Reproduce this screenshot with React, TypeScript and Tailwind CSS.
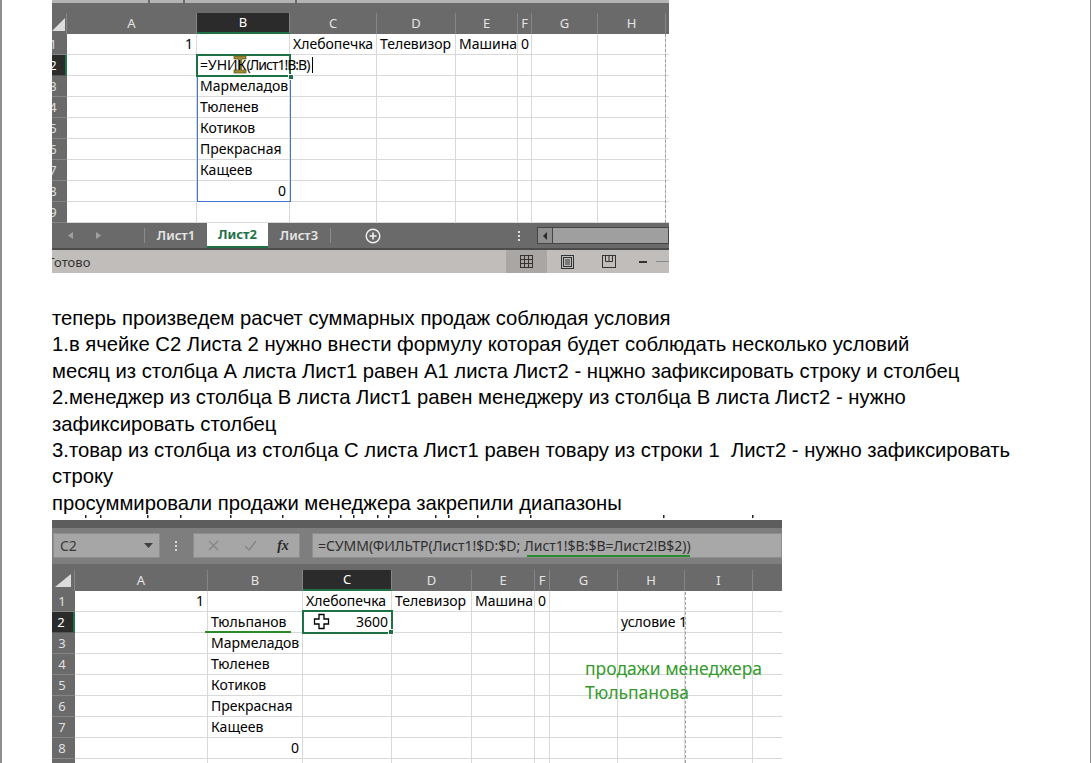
import React from "react";

type CellData = { t?: string; r?: boolean; edit?: boolean };

const NOTO = "font-['Noto_Sans',sans-serif]";

function Corner({ pts, w, h }: { pts: string; w: number; h: number }) {
  return (
    <svg width={w} height={h} className="block">
      <polygon points={pts} fill="#dcdcdc" />
    </svg>
  );
}

function SheetGrid({
  hdrW,
  widths,
  letters,
  selCol,
  selRow,
  rows,
  clipNums,
  corner,
}: {
  hdrW: string;
  widths: string[];
  letters: string[];
  selCol: number;
  selRow: number;
  rows: CellData[][];
  clipNums: boolean;
  corner: React.ReactNode;
}) {
  return (
    <div className={`flex flex-col ${NOTO}`}>
      <div className="flex h-[21px] bg-[#6a6a6a]">
        <div className={`${hdrW} shrink-0 h-full border-r border-[#858585] overflow-hidden`}>{corner}</div>
        {letters.map((l, i) => (
          <div
            key={l}
            className={`${widths[i]} shrink-0 h-full flex items-center justify-center border-r border-[#858585] text-[13px] leading-none ${
              i === selCol ? "bg-[#2b2b2b] text-white border-b-2 border-b-[#1e7145]" : "text-[#e4e4e4]"
            }`}
          >
            {l}
          </div>
        ))}
        <div className="flex-1 h-full" />
      </div>
      {rows.map((row, ri) => (
        <div key={ri} className="flex h-[21px]">
          <div
            className={`${hdrW} shrink-0 h-full flex items-center overflow-hidden border-b text-[13px] leading-none ${
              ri === selRow
                ? "bg-[#2b2b2b] text-white border-r-2 border-r-[#1e7145] border-b-[#555555]"
                : "bg-[#6a6a6a] text-[#e0e0e0] border-b-[#858585]"
            } ${clipNums ? "" : "justify-center"}`}
          >
            {clipNums ? (
              <div className="w-[22px] ml-[-10px] shrink-0 text-center">{ri + 1}</div>
            ) : (
              <div className="pr-[3px]">{ri + 1}</div>
            )}
          </div>
          {row.map((c, ci) => (
            <div
              key={ci}
              className={`${widths[ci]} shrink-0 h-full border-r border-b border-[#d9d9d9] flex items-center px-[3px] whitespace-nowrap text-[14px] leading-none text-black ${
                c.r ? "justify-end" : "justify-start"
              }`}
            >
              {c.t ? (
                c.edit ? (
                  <span className="relative z-10 flex items-center">
                    <span>=УНИК</span>
                    <span className="tracking-[-1px]">(Лист1!B:B)</span>
                    <span className="ml-[3px] w-[1px] h-[16px] bg-black" />
                  </span>
                ) : (
                  <span className="relative z-10">{c.t}</span>
                )
              ) : null}
            </div>
          ))}
          <div className="flex-1 h-full border-b border-[#d9d9d9]" />
        </div>
      ))}
    </div>
  );
}

const X1W = ["w-[130px]", "w-[93px]", "w-[87px]", "w-[79px]", "w-[62px]", "w-[14px]", "w-[66px]", "w-[68px]"];
const X1L = ["A", "B", "C", "D", "E", "F", "G", "H"];
const e: CellData = {};
const X1R: CellData[][] = [
  [{ t: "1", r: true }, e, { t: "Хлебопечка" }, { t: "Телевизор" }, { t: "Машина" }, { t: "0" }, e, e],
  [e, { t: "=УНИК(Лист1!B:B)", edit: true }, e, e, e, e, e, e],
  [e, { t: "Мармеладов" }, e, e, e, e, e, e],
  [e, { t: "Тюленев" }, e, e, e, e, e, e],
  [e, { t: "Котиков" }, e, e, e, e, e, e],
  [e, { t: "Прекрасная" }, e, e, e, e, e, e],
  [e, { t: "Кащеев" }, e, e, e, e, e, e],
  [e, { t: "0", r: true }, e, e, e, e, e, e],
  [e, e, e, e, e, e, e, e],
];

function Excel1() {
  return (
    <div className="relative w-[617px] h-[273px] overflow-hidden flex flex-col bg-white">
      <div className="h-[3px] bg-[#b4b4b4] flex">
        <div className="w-[96px]" />
        <div className="w-[2px] bg-[#6a6a6a]" />
        <div className="w-[33px]" />
        <div className="w-[2px] bg-[#6a6a6a]" />
        <div className="w-[110px]" />
        <div className="w-[2px] bg-[#6a6a6a]" />
      </div>
      <div className="h-[10px] bg-[#6a6a6a]" />
      <SheetGrid
        hdrW="w-[15px]"
        widths={X1W}
        letters={X1L}
        selCol={1}
        selRow={1}
        rows={X1R}
        clipNums={true}
        corner={<Corner pts="13,5 13,18 0,18" w={15} h={21} />}
      />
      {/* tab bar */}
      <div className={`flex h-[25px] bg-[#6a6a6a] items-stretch ${NOTO}`}>
        <div className="w-[92px] shrink-0 flex items-center">
          <svg width="92" height="25" className="block">
            <polygon points="21,9 21,16 16,12.5" fill="#a0a0a0" />
            <polygon points="44,9 44,16 49,12.5" fill="#a0a0a0" />
          </svg>
        </div>
        <div className="w-[1px] shrink-0 bg-[#8c8c8c] my-[5px]" />
        <div className="w-[62px] shrink-0 flex items-center justify-center text-[13px] font-semibold text-[#e6e6e6]">Лист1</div>
        <div className="w-[61px] shrink-0 flex items-center justify-center text-[13px] font-bold text-[#1e7145] bg-white border-b-2 border-[#1e7145]">
          Лист2
        </div>
        <div className="w-[62px] shrink-0 flex items-center justify-center text-[13px] font-semibold text-[#e6e6e6]">Лист3</div>
        <div className="w-[1px] shrink-0 bg-[#8c8c8c] my-[5px]" />
        <div className="w-[84px] shrink-0 flex items-center justify-center">
          <svg width="16" height="16" viewBox="0 0 16 16" className="block">
            <circle cx="8" cy="8" r="6.8" fill="none" stroke="#f2f2f2" strokeWidth="1.4" />
            <path d="M8 4.5v7M4.5 8h7" stroke="#f2f2f2" strokeWidth="1.6" />
          </svg>
        </div>
        <div className="w-[100px] shrink-0" />
        <div className="w-[8px] shrink-0 flex flex-col items-center justify-center gap-[2px]">
          <div className="w-[2px] h-[2px] bg-[#dedede]" />
          <div className="w-[2px] h-[2px] bg-[#dedede]" />
          <div className="w-[2px] h-[2px] bg-[#dedede]" />
        </div>
        <div className="w-[14px] shrink-0" />
        <div className="flex-1 flex items-center">
          <div className="w-full h-[17px] flex border border-[#454545] bg-[#9f9f9f]">
            <div className="w-[15px] h-full border-r border-[#454545] bg-[#8f8f8f] flex items-center justify-center">
              <svg width="6" height="8" className="block">
                <polygon points="5,0 5,8 1,4" fill="#2a2a2a" />
              </svg>
            </div>
          </div>
        </div>
      </div>
      <div className="h-[2px] bg-[#4c4c4c]" />
      {/* status bar */}
      <div className={`flex h-[23px] bg-[#c1bdba] items-stretch ${NOTO}`}>
        <div className="flex-1 flex items-center pt-[2px] ml-[-4px] text-[13px] text-[#333333]">Готово</div>
        <div className="w-[41px] shrink-0 bg-[#a9a6a3] flex items-center justify-center">
          <svg width="13" height="13" className="block">
            <rect x="0.5" y="0.5" width="12" height="12" fill="none" stroke="#333" />
            <path d="M4.5 .5v12M8.5 .5v12M.5 4.5h12M.5 8.5h12" stroke="#333" />
          </svg>
        </div>
        <div className="w-[40px] shrink-0 flex items-center justify-center">
          <svg width="13" height="14" className="block">
            <rect x="0.5" y="0.5" width="12" height="13" fill="none" stroke="#333" />
            <rect x="2.5" y="2.5" width="8" height="9" fill="#bbb" stroke="#333" />
            <path d="M4 5h5M4 7h5M4 9h5" stroke="#333" />
          </svg>
        </div>
        <div className="w-[43px] shrink-0 flex items-center justify-center">
          <svg width="14" height="13" className="block">
            <rect x="0.5" y="0.5" width="13" height="12" fill="none" stroke="#333" />
            <path d="M3.5 .5v6h7v-6M7 .5v6" fill="none" stroke="#333" />
          </svg>
        </div>
        <div className="w-[26px] shrink-0 flex items-center justify-center">
          <div className="w-[8px] h-[2px] bg-[#333333]" />
        </div>
        <div className="w-[13px] shrink-0 flex items-center">
          <div className="w-full h-[1px] bg-[#8a8a8a]" />
        </div>
      </div>

      {/* overlays */}
      <div className="absolute left-[613px] top-[34px] h-[189px] border-l border-dashed border-[#a0a0a0]" />
      <div className="absolute left-[145px] top-[55px] w-[94px] h-[147px] border border-[#3f78cc]" />
      <div className="absolute left-[144px] top-[54px] w-[95px] h-[23px] border-2 border-[#1e7145]" />
      <div className="absolute left-[236px] top-[74px] w-[6px] h-[6px] bg-[#1e7145] border border-white" />
      <div className="absolute left-[181px] top-[55px]">
        <svg width="14" height="19" viewBox="0 0 14 19" className="block">
          <path d="M1 1h12v3H8.6v11H13v3H1v-3h4.4V4H1z" fill="#9a8836" stroke="#6b5d1f" strokeWidth="0.8" />
        </svg>
      </div>
    </div>
  );
}

const X2W = ["w-[133px]", "w-[95px]", "w-[89px]", "w-[80px]", "w-[63px]", "w-[15px]", "w-[68px]", "w-[67px]", "w-[68px]"];
const X2L = ["A", "B", "C", "D", "E", "F", "G", "H", "I"];
const X2R: CellData[][] = [
  [{ t: "1", r: true }, e, { t: "Хлебопечка" }, { t: "Телевизор" }, { t: "Машина" }, { t: "0" }, e, e, e],
  [e, { t: "Тюльпанов" }, { t: "3600", r: true }, e, e, e, e, { t: "условие 1" }, e],
  [e, { t: "Мармеладов" }, e, e, e, e, e, e, e],
  [e, { t: "Тюленев" }, e, e, e, e, e, e, e],
  [e, { t: "Котиков" }, e, e, e, e, e, e, e],
  [e, { t: "Прекрасная" }, e, e, e, e, e, e, e],
  [e, { t: "Кащеев" }, e, e, e, e, e, e, e],
  [e, { t: "0", r: true }, e, e, e, e, e, e, e],
  [e, e, e, e, e, e, e, e, e],
];

const MARKS = [33, 48, 95, 128, 178, 230, 288, 301, 325, 336, 383, 396, 425, 478, 611, 700];

function Excel2() {
  return (
    <div className="relative w-[730px] h-[248px] overflow-hidden flex flex-col bg-white">
      <svg width="730" height="5" className="block shrink-0">
        {MARKS.map((m) => (
          <rect key={m} x={m} y={0} width={1.5} height={3} fill="#222" />
        ))}
      </svg>
      <div className="h-[8px] shrink-0 bg-[#5d5d5d]" />
      <div className={`h-[36px] shrink-0 bg-[#7e7e7e] flex items-start pt-[5px] ${NOTO}`}>
        <div className="ml-[1px] w-[107px] h-[25px] shrink-0 bg-[#a6a6a6] border border-[#8e8e8e] flex items-center justify-between pl-[6px] pr-[6px]">
          <span className="text-[14px] text-[#3a3a3a] leading-none">C2</span>
          <svg width="9" height="5" className="block">
            <polygon points="0,0 9,0 4.5,5" fill="#404040" />
          </svg>
        </div>
        <div className="w-[12px] shrink-0" />
        <div className="w-[8px] h-[25px] shrink-0 flex flex-col items-center justify-center gap-[2px]">
          <div className="w-[2px] h-[2px] bg-[#d8d8d8]" />
          <div className="w-[2px] h-[2px] bg-[#d8d8d8]" />
          <div className="w-[2px] h-[2px] bg-[#d8d8d8]" />
        </div>
        <div className="w-[13px] shrink-0" />
        <div className="w-[107px] h-[25px] shrink-0 bg-[#a6a6a6] border border-[#8e8e8e] flex items-center">
          <div className="w-[38px] flex justify-center">
            <svg width="11" height="11" className="block">
              <path d="M1 1l9 9M10 1l-9 9" stroke="#858585" strokeWidth="1.3" />
            </svg>
          </div>
          <div className="w-[36px] flex justify-center">
            <svg width="13" height="11" className="block">
              <path d="M1 6l4 4 7-9" fill="none" stroke="#858585" strokeWidth="1.4" />
            </svg>
          </div>
          <div className="w-[30px] flex justify-center font-['Liberation_Serif',serif] italic font-bold text-[14px] text-[#2a2a2a] leading-none">
            fx
          </div>
        </div>
        <div className="w-[12px] shrink-0" />
        <div className="flex-1 h-[25px] bg-[#a8a8a8] border border-[#8e8e8e] flex items-center pl-[5px] text-[14px] text-[#2f2f2f] leading-none whitespace-nowrap">
          =СУММ(ФИЛЬТР(Лист1!$D:$D; Лист1!$B:$B=Лист2!B$2))
        </div>
      </div>
      <div className="h-[6px] shrink-0 bg-[#6a6a6a]" />
      <SheetGrid
        hdrW="w-[23px]"
        widths={X2W}
        letters={X2L}
        selCol={2}
        selRow={1}
        rows={X2R}
        clipNums={false}
        corner={<Corner pts="19,4 19,17 3,17" w={23} h={21} />}
      />

      {/* overlays */}
      <div className="absolute left-[475px] top-[40px] w-[163px] h-[2px] bg-[#2b8a2b]" />
      <div className="absolute left-[633px] top-[77px] h-[171px] border-l border-dashed border-[#a0a0a0]" />
      <div className="absolute left-[153px] top-[116px] w-[86px] h-[2px] bg-[#2b8a2b]" />
      <div className="absolute left-[250px] top-[95px] w-[91px] h-[24px] border-2 border-[#1e7145]" />
      <div className="absolute left-[336px] top-[114px] w-[6px] h-[6px] bg-[#1e7145] border border-white" />
      <div className="absolute left-[261px] top-[98px]">
        <svg width="17" height="17" viewBox="0 0 17 17" className="block">
          <path d="M6 1.5h5v4.5h4.5v5H11v4.5H6V11H1.5V6H6z" fill="white" stroke="black" strokeWidth="1.3" />
        </svg>
      </div>
      <div className={`absolute left-[533px] top-[141px] text-[17.5px] leading-[24px] text-[#359a2c] ${NOTO}`}>
        <div>продажи менеджера</div>
        <div>Тюльпанова</div>
      </div>
    </div>
  );
}

const LINES = [
  "теперь произведем расчет суммарных продаж соблюдая условия",
  "1.в ячейке С2 Листа 2 нужно внести формулу которая будет соблюдать несколько условий",
  "месяц из столбца А листа Лист1 равен А1 листа Лист2 - нцжно зафиксировать строку и столбец",
  "2.менеджер из столбца В листа Лист1 равен менеджеру из столбца В листа Лист2 - нужно",
  "зафиксировать столбец",
  "3.товар из столбца из столбца С листа Лист1 равен товару из строки 1  Лист2 - нужно зафиксировать",
  "строку",
  "просуммировали продажи менеджера закрепили диапазоны",
];

export default function App() {
  return (
    <div className="w-[1091px] h-[763px] bg-white overflow-hidden box-border border-l-2 border-r border-[#8e8e8e]">
      <div className="pl-[50px] flex flex-col">
        <Excel1 />
        <div className="mt-[32px] mb-[-1px] font-['Liberation_Sans',Arial,sans-serif] text-[20.25px] leading-[26.4px] text-black">
          {LINES.map((l, i) => (
            <div key={i} className="whitespace-pre">
              {l}
            </div>
          ))}
        </div>
        <Excel2 />
      </div>
    </div>
  );
}
